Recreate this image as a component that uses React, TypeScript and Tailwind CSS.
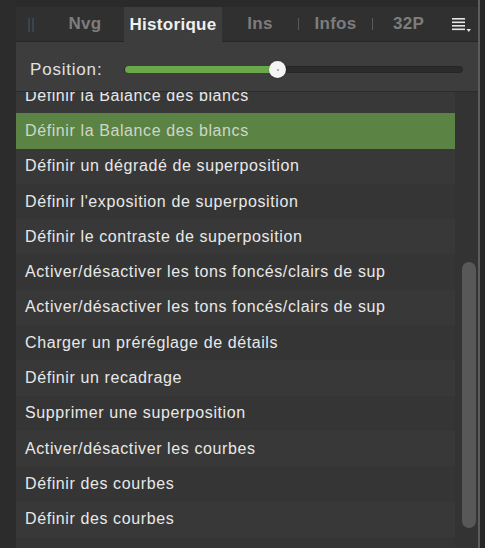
import React from 'react';

const rows = [
  'Définir la Balance des blancs',
  'Définir la Balance des blancs',
  'Définir un dégradé de superposition',
  "Définir l'exposition de superposition",
  'Définir le contraste de superposition',
  'Activer/désactiver les tons foncés/clairs de sup',
  'Activer/désactiver les tons foncés/clairs de sup',
  'Charger un préréglage de détails',
  'Définir un recadrage',
  'Supprimer une superposition',
  'Activer/désactiver les courbes',
  'Définir des courbes',
  'Définir des courbes',
];

function MenuIcon() {
  return (
    <svg width="20" height="16" viewBox="0 0 20 16">
      <rect x="0" y="1" width="13" height="1.6" fill="#e6e6e6" />
      <rect x="0" y="4.5" width="13" height="1.6" fill="#e6e6e6" />
      <rect x="0" y="8" width="13" height="1.6" fill="#e6e6e6" />
      <rect x="0" y="11.5" width="13" height="1.6" fill="#e6e6e6" />
      <path d="M14.5 12 L19 12 L16.75 15 Z" fill="#e6e6e6" />
    </svg>
  );
}

export default function App() {
  return (
    <div
      className="w-[485px] h-[548px] bg-[#2c2c2c] flex overflow-hidden"
      style={{ fontFamily: '"Liberation Sans", Arial, sans-serif' }}
    >
      <div className="w-[16px] shrink-0" />
      <div className="w-[462px] shrink-0 flex flex-col">
        <div className="h-[7px] bg-[#2a2a2a]" />
        {/* tabs */}
        <div className="h-[35px] bg-[#303030] flex items-stretch border-b border-[#262626]">
          <div className="w-[30px] flex items-center pl-[11px] text-[#4e4e4e] text-[15px]">||</div>
          <div className="w-[78px] flex items-center justify-center text-[#7d7d7d] text-[17px] font-bold tracking-[0.3px]">Nvg</div>
          <div className="w-[98px] flex items-center justify-center bg-[#3d3d3d] text-[#f0f0f0] text-[17px] font-bold tracking-[0.3px] -mb-px">Historique</div>
          <div className="w-[76px] flex items-center justify-center text-[#7d7d7d] text-[17px] font-bold tracking-[0.3px]">Ins</div>
          <div className="w-px my-[11px] bg-[#5a5a5a]" />
          <div className="w-[73px] flex items-center justify-center text-[#7d7d7d] text-[17px] font-bold tracking-[0.3px]">Infos</div>
          <div className="w-px my-[11px] bg-[#5a5a5a]" />
          <div className="w-[71px] flex items-center justify-center text-[#7d7d7d] text-[17px] font-bold tracking-[0.3px]">32P</div>
          <div className="flex-1 flex items-center justify-end pr-[6px] pt-[2px]">
            <MenuIcon />
          </div>
        </div>
        {/* slider */}
        <div className="h-[50px] bg-[#3d3d3d] flex items-center pl-[14px] pr-[15px] pt-[6px] border-b border-[#2c2c2c]">
          <span className="text-[#e0e0e0] text-[17px] tracking-[0.8px] w-[94px]">Position:</span>
          <div className="flex-1 relative h-[7px] rounded-full bg-[#2b2b2b] border border-[#262626]">
            <div className="absolute left-0 top-[-1px] h-[7px] w-[154px] rounded-full bg-[#6aa84a]" />
            <div className="absolute left-[144px] top-[-6px] w-[17px] h-[17px] rounded-full bg-[#f4f4f4] flex items-center justify-center shadow">
              <div className="w-[2px] h-[2px] rounded-full bg-[#999]" />
            </div>
          </div>
        </div>
        {/* list */}
        <div className="flex-1 flex bg-[#353535] overflow-hidden">
          <div className="w-[439px] flex flex-col -mt-[14px]">
            {rows.map((r, i) => (
              <div
                key={i}
                className={
                  'h-[35.3px] shrink-0 flex items-center pl-[9px] text-[16px] tracking-[0.6px] whitespace-nowrap ' +
                  (i === 1
                    ? 'bg-[#5b8444] text-[#cfd6c8]'
                    : i % 2 === 0
                    ? 'bg-[#383838] text-[#e8e8e8]'
                    : 'bg-[#353535] text-[#e8e8e8]')
                }
              >
                {r}
              </div>
            ))}
          </div>
          <div className="flex-1 flex justify-center pl-[4px] pt-[170px] pb-[12px] bg-[#333333]">
            <div className="w-[14px] h-[266px] rounded-full bg-[#585858]" />
          </div>
        </div>
      </div>
      <div className="w-[2px] bg-[#5c5c5c]" />
      <div className="flex-1 bg-[#262626]" />
    </div>
  );
}
